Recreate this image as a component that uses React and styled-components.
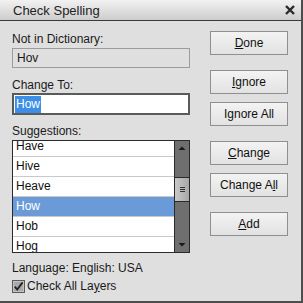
import React from "react";
import styled, { createGlobalStyle } from "styled-components";

const Global = createGlobalStyle`
  html, body { margin: 0; padding: 0; background: #dfdfdf; }
  body { font-family: "Liberation Sans", Arial, sans-serif; font-size: 12px; color: #1a1a1a; }
`;

const Window = styled.div`
  box-sizing: border-box;
  width: 303px;
  height: 303px;
  background: #dfdfdf;
  border-right: 2px solid #4d4d4d;
  border-bottom: 2px solid #4d4d4d;
  display: flex;
  flex-direction: column;
`;

const TitleBar = styled.div`
  height: 20px;
  border-bottom: 1px solid #3a3a3a;
  background: linear-gradient(#f2f2f2, #cdcdcd);
  display: flex;
  align-items: center;
  justify-content: space-between;
  padding: 0 6px 0 13px;
  font-size: 13px;
  color: #222;
`;

const Close = styled.svg`
  width: 10px;
  height: 10px;
`;

const Body = styled.div`
  display: flex;
  flex: 1;
`;

const LeftCol = styled.div`
  width: 178px;
  margin-left: 12px;
  display: flex;
  flex-direction: column;
`;

const Label = styled.div`
  height: 14px;
  line-height: 14px;
  margin-top: ${(p) => p.$mt}px;
  margin-bottom: ${(p) => p.$mb ?? 2}px;
  white-space: nowrap;
`;

const ReadField = styled.div`
  box-sizing: border-box;
  height: 20px;
  border: 1px solid #9c9c9c;
  padding-left: 4px;
  line-height: 18px;
`;

const Input = styled.div`
  box-sizing: border-box;
  height: 22px;
  border: 2px solid #5a5a5a;
  background: #fff;
  padding-left: 1px;
  display: flex;
  align-items: center;
`;

const Sel = styled.span`
  background: #3c8ee6;
  color: #fff;
  padding: 1px 1px;
  line-height: 15px;
`;

const List = styled.div`
  box-sizing: border-box;
  height: 113px;
  border: 1px solid #2a2a2a;
  display: flex;
  overflow: hidden;
  background: #fff;
`;

const Items = styled.div`
  flex: 1;
  margin-top: -4px;
`;

const Item = styled.div`
  height: 19px;
  line-height: 19px;
  padding-left: 3px;
  border-bottom: 1px solid #c9c9c9;
  background: ${(p) => (p.$sel ? "#6a9bd8" : "#fff")};
  color: ${(p) => (p.$sel ? "#fff" : "#111")};
`;

const Scroll = styled.div`
  width: 14px;
  border-left: 1px solid #2a2a2a;
  background: #6f6f6f;
  display: flex;
  flex-direction: column;
  align-items: stretch;
`;

const Arrow = styled.svg`
  width: 14px;
  height: 14px;
  display: block;
`;

const Track = styled.div`
  flex: 1;
  display: flex;
  flex-direction: column;
`;

const Thumb = styled.div`
  margin-top: ${(p) => p.$top}px;
  height: 25px;
  box-sizing: border-box;
  border-top: 1px solid #2a2a2a;
  border-bottom: 1px solid #2a2a2a;
  background: linear-gradient(90deg, #c8c8c8, #a8a8a8);
  display: flex;
  align-items: center;
  justify-content: center;
`;

const Grip = styled.div`
  width: 5px;
  height: 5px;
  background: repeating-linear-gradient(#333 0 1px, transparent 1px 2px);
`;

const CheckRow = styled.div`
  display: flex;
  align-items: center;
  gap: 2px;
  margin-top: 4px;
  height: 14px;
`;

const RightCol = styled.div`
  margin-left: 20px;
  display: flex;
  flex-direction: column;
`;

const Button = styled.div`
  box-sizing: border-box;
  width: 78px;
  height: 24px;
  margin-top: ${(p) => p.$mt}px;
  border: 1px solid #8f8f8f;
  background: linear-gradient(#f3f3f3, #e2e2e2);
  display: flex;
  align-items: center;
  justify-content: center;
  color: #111;
  font-size: 12px;
`;

const U = styled.span`
  text-decoration: underline;
`;

const items = ["Have", "Hive", "Heave", "How", "Hob", "Hog"];

export default function App() {
  return (
    <>
      <Global />
      <Window>
        <TitleBar>
          <span>Check Spelling</span>
          <Close viewBox="0 0 10 10">
            <path d="M1 1 L9 9 M9 1 L1 9" stroke="#2a2a2a" strokeWidth="2.4" />
          </Close>
        </TitleBar>
        <Body>
          <LeftCol>
            <Label $mt={11}>Not in Dictionary:</Label>
            <ReadField>Hov</ReadField>
            <Label $mt={10} $mb={1}>Change To:</Label>
            <Input>
              <Sel>How</Sel>
            </Input>
            <Label $mt={9}>Suggestions:</Label>
            <List>
              <Items>
                {items.map((t) => (
                  <Item key={t} $sel={t === "How"}>
                    {t}
                  </Item>
                ))}
              </Items>
              <Scroll>
                <Arrow viewBox="0 0 14 14">
                  <path d="M3.5 9 L7 5.5 L10.5 9 Z" fill="#1a1a1a" />
                </Arrow>
                <Track>
                  <Thumb $top={22}>
                    <Grip />
                  </Thumb>
                </Track>
                <Arrow viewBox="0 0 14 14">
                  <path d="M3.5 5 L7 8.5 L10.5 5 Z" fill="#1a1a1a" />
                </Arrow>
              </Scroll>
            </List>
            <Label $mt={8} $mb={0}>Language: English: USA</Label>
            <CheckRow>
              <svg width="13" height="13" viewBox="0 0 13 13">
                <rect x="0.5" y="0.5" width="12" height="12" fill="#a9a9a9" stroke="#5a5a5a" />
                <rect x="1.5" y="1.5" width="10" height="10" fill="none" stroke="#c4c4c4" />
                <path d="M2.8 6.6 L5.2 9.6 L10.6 2.4" fill="none" stroke="#222" strokeWidth="1.8" />
              </svg>
              <span>
                Check All La<U>y</U>ers
              </span>
            </CheckRow>
          </LeftCol>
          <RightCol>
            <Button $mt={10}>
              <span><U>D</U>one</span>
            </Button>
            <Button $mt={15}>
              <span><U>I</U>gnore</span>
            </Button>
            <Button $mt={8}>
              <span>I<U>g</U>nore All</span>
            </Button>
            <Button $mt={15}>
              <span><U>C</U>hange</span>
            </Button>
            <Button $mt={8}>
              <span>Change A<U>l</U>l</span>
            </Button>
            <Button $mt={15}>
              <span><U>A</U>dd</span>
            </Button>
          </RightCol>
        </Body>
      </Window>
    </>
  );
}
